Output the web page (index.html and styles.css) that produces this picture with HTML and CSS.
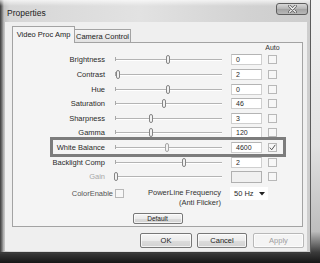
FILE: index.html
```html
<!DOCTYPE html>
<html>
<head>
<meta charset="utf-8">
<link rel="stylesheet" href="styles.css">
</head>
<body>
<div class="window">
  <div class="titlebar">
    <span class="title">Properties</span>
    <span class="close"><svg width="9" height="8" viewBox="0 0 9 8"><path d="M1.5 1 L7.5 7 M7.5 1 L1.5 7" stroke="#5a5a5a" stroke-width="2.6" stroke-linecap="round"/><path d="M1.5 1 L7.5 7 M7.5 1 L1.5 7" stroke="#f4f4f4" stroke-width="1.3" stroke-linecap="round"/></svg></span>
  </div>
  <div class="client">
    <div class="tabs">
      <div class="tab active">Video Proc Amp</div>
      <div class="tab">Camera Control</div>
    </div>
    <div class="panel">
      <div class="grid">
        <span></span><span></span><span></span><span class="auto-h">Auto</span>

        <span class="label">Brightness</span>
        <div class="slider"><span class="thumb" style="left:53px"></span></div>
        <span class="value">0</span><span class="check"></span>

        <span class="label">Contrast</span>
        <div class="slider"><span class="thumb" style="left:3px"></span></div>
        <span class="value">2</span><span class="check"></span>

        <span class="label">Hue</span>
        <div class="slider"><span class="thumb" style="left:53px"></span></div>
        <span class="value">0</span><span class="check"></span>

        <span class="label">Saturation</span>
        <div class="slider"><span class="thumb" style="left:49px"></span></div>
        <span class="value">46</span><span class="check"></span>

        <span class="label">Sharpness</span>
        <div class="slider"><span class="thumb" style="left:36px"></span></div>
        <span class="value">3</span><span class="check"></span>

        <span class="label">Gamma</span>
        <div class="slider"><span class="thumb" style="left:36px"></span></div>
        <span class="value">120</span><span class="check"></span>

        <span class="label">White Balance</span>
        <div class="slider"><span class="thumb faded" style="left:52px"></span></div>
        <span class="value">4600</span><span class="check checked"><svg width="7" height="7" viewBox="0 0 7 7"><path d="M0.8 3.6 L2.7 5.8 L6.3 0.8" fill="none" stroke="#555" stroke-width="1"/></svg></span>

        <span class="label">Backlight Comp</span>
        <div class="slider"><span class="thumb" style="left:69px"></span></div>
        <span class="value">2</span><span class="check"></span>

        <span class="label disabled">Gain</span>
        <div class="slider"><span class="thumb" style="left:1px"></span></div>
        <span class="value empty"></span><span class="check"></span>
      </div>

      <div class="extra">
        <span class="ce-label">ColorEnable</span>
        <span class="check ce-check"></span>
        <div class="power"><div>PowerLine Frequency</div><div>(Anti Flicker)</div></div>
        <div class="select"><span>50 Hz</span><svg width="6" height="4" viewBox="0 0 6 4"><path d="M0 0 H6 L3 3.5 Z" fill="#222"/></svg></div>
      </div>

      <button class="btn default">Default</button>

      <div class="highlight"></div>
    </div>
    <div class="buttons">
      <button class="btn ok">OK</button>
      <button class="btn cancel">Cancel</button>
      <button class="btn apply" disabled>Apply</button>
    </div>
  </div>
</div>
</body>
</html>
```

FILE: styles.css
```css
* { box-sizing: border-box; }

body {
  margin: 0;
  width: 320px;
  height: 263px;
  overflow: hidden;
  background: linear-gradient(to bottom, #f2f2f2 0, #e2e2e2 55%, #bdbdbd 88%, #3a3a3a 96%, #161616 100%);
  font-family: "Liberation Sans", Arial, sans-serif;
  color: #2a2a2a;
}

.window {
  width: 311px;
  height: 254px;
  padding: 0 3px 1px 5px;
  display: flex;
  flex-direction: column;
  background:
    linear-gradient(to bottom, rgba(255,255,255,0.7) 0, rgba(255,255,255,0) 6px),
    linear-gradient(to right, #3a3a3a 0, #777 2px, #c2c2c2 4px, #d6d6d6 10px, #e2e2e2 45%, #d2d2d2 80%, #cdcdcd 100%);
  border-right: 1px solid #5c5c5c;
  border-bottom: 2px solid #3a3a3a;
}

.titlebar {
  height: 22px;
  display: flex;
  align-items: flex-start;
}

.title {
  font-size: 8.5px;
  color: #222;
  padding-left: 2px;
  margin-top: 8px;
}

.close {
  margin-left: auto;
  margin-right: -1px;
  margin-top: 3px;
  width: 32px;
  height: 12px;
  border: 1px solid #5e5e5e;
  border-radius: 3px;
  background: linear-gradient(to bottom, #d8d8d8, #b4b4b4 50%, #a2a2a2 51%, #b8b8b8);
  display: flex;
  align-items: center;
  justify-content: center;
}

.client {
  flex: 1;
  background: #efefef;
  padding: 4px 4px 0 7px;
  display: flex;
  flex-direction: column;
}

.tabs {
  height: 16px;
  display: flex;
  align-items: flex-end;
}

.tab {
  font-size: 7.5px;
  height: 13px;
  padding: 0;
  display: flex;
  align-items: center;
  justify-content: center;
  white-space: nowrap;
  border: 1px solid #a3a3a3;
  border-bottom: none;
  background: linear-gradient(to bottom, #f6f6f6, #e2e2e2);
  color: #222;
}

.tab.active {
  height: 17px;
  margin-bottom: -1px;
  padding-bottom: 1px;
  width: 63px;
  background: #f4f4f4;
  position: relative;
  z-index: 1;
}

.tab:not(.active) {
  width: 56px;
  border-left: none;
}

.panel {
  width: 291px;
  height: 185px;
  border: 1px solid #a3a3a3;
  background: #f4f4f4;
  position: relative;
  display: flex;
  flex-direction: column;
}

.grid {
  display: grid;
  grid-template-columns: 102px 116px 37px 9px;
  grid-template-rows: 9.7px repeat(9, 14.6px);
  align-items: center;
}

.auto-h {
  font-size: 7px;
  justify-self: center;
  white-space: nowrap;
  color: #333;
}

.label {
  font-size: 7.5px;
  text-align: right;
  padding-right: 10px;
  white-space: nowrap;
}

.label.disabled { color: #a8a8a8; }

.slider {
  width: 107px;
  height: 9px;
  position: relative;
  background: linear-gradient(to bottom, transparent 4px, #b4b4b4 4px, #b4b4b4 5px, #ffffff 5px, #ffffff 6px, transparent 6px);
}

.slider::before {
  content: "";
  position: absolute;
  left: 0;
  top: 2px;
  width: 1px;
  height: 4px;
  background: #a8a8a8;
}

.thumb {
  position: absolute;
  top: 0;
  width: 4px;
  height: 9px;
  margin-left: -2px;
  border: 1px solid #858585;
  border-radius: 2px;
  background: #f2f2f2;
}

.thumb.faded { border-color: #a6a6a6; }

.value {
  width: 31px;
  height: 11px;
  border: 1px solid #cfcfcf;
  border-top-color: #b4b4b4;
  background: #fff;
  font-size: 7px;
  padding-left: 4px;
  line-height: 9px;
}

.value.empty {
  height: 12px;
  background: #f0f0f0;
  border-color: #b0b0b0;
}

.check {
  width: 9px;
  height: 9px;
  border: 1px solid #b8b8b8;
  background: #f7f7f7;
  display: flex;
  align-items: center;
  justify-content: center;
}

.extra {
  margin-top: 3px;
  display: flex;
  align-items: flex-start;
  font-size: 7.5px;
}

.ce-label {
  width: 100px;
  text-align: right;
  color: #555;
  line-height: 13px;
}

.ce-check {
  margin-left: 2px;
  margin-top: 2px;
}

.power {
  width: 97px;
  text-align: right;
  padding-top: 1px;
  line-height: 10px;
  color: #333;
}

.select {
  margin-left: 9px;
  width: 38px;
  height: 13px;
  background: #fff;
  display: flex;
  align-items: center;
  justify-content: space-between;
  padding: 0 3px 0 4px;
  font-size: 7.5px;
}

.btn {
  font-family: "Liberation Sans", Arial, sans-serif;
  font-size: 7.5px;
  color: #222;
  border: 1px solid #777;
  border-radius: 2px;
  background: linear-gradient(to bottom, #f6f6f6, #ebebeb 50%, #dcdcdc 51%, #d2d2d2);
  padding: 0;
  margin: 0;
  box-shadow: inset 0 0 0 1px rgba(255,255,255,0.7);
}

.default {
  align-self: center;
  margin-top: 5px;
  width: 50px;
  height: 11px;
  font-size: 6.5px;
  line-height: 9px;
}

.highlight {
  position: absolute;
  left: 37px;
  top: 94px;
  width: 236px;
  height: 20px;
  border: 3px solid #7c7c7c;
}

.buttons {
  margin-top: 6px;
  margin-right: -1px;
  display: flex;
  justify-content: flex-end;
  gap: 5px;
}

.buttons .btn { height: 15px; }
.ok { width: 52px; }
.cancel { width: 50px; margin-right: 1px; }
.apply {
  width: 51px;
  color: #a0a0a0;
  border-color: #b8b8b8;
  background: #f4f4f4;
}
```
